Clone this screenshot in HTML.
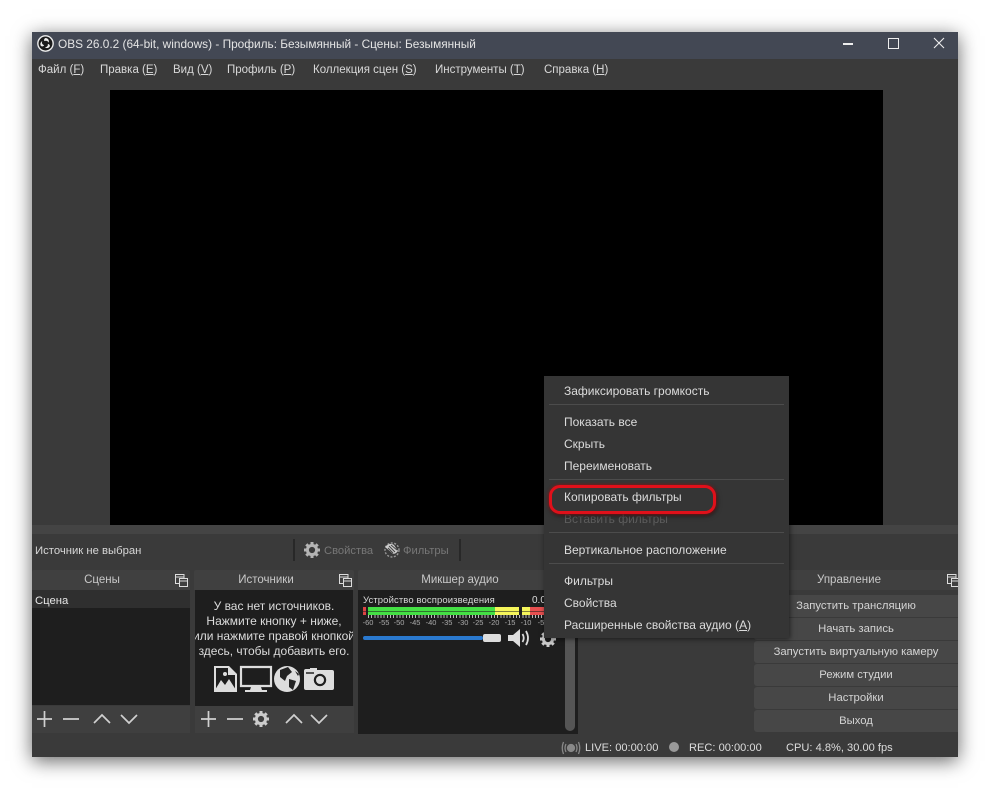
<!DOCTYPE html>
<html><head><meta charset="utf-8"><style>
html,body{margin:0;padding:0;background:#fff;width:990px;height:789px;overflow:hidden}
body{font-family:"Liberation Sans","DejaVu Sans",sans-serif;font-size:11.5px;color:#d8d8d8}
#root{position:absolute;left:0;top:0;width:990px;height:789px;filter:blur(.35px)}
#root div,#root span,#root svg{position:absolute}
.t{white-space:nowrap;line-height:14px}
u{text-decoration:underline}
.hd{background:#404040;height:20px;top:570px;line-height:21px;color:#c8c8c8;border-radius:2px 2px 0 0}
.hd b{font-weight:normal;position:absolute;top:0;transform:translateX(-50%);white-space:nowrap}
.bt{background:#474747;left:754px;width:204px;height:22px;line-height:22px;text-align:center;color:#d4d4d4;border-radius:3px 0 0 3px;font-size:11.3px}
.m{left:564px;color:#dcdcdc;font-size:12px;white-space:nowrap;line-height:14px}
.sep{left:549px;width:235px;height:1px;background:#4c4c4c}
.st{top:741px;color:#ddd;font-size:11.100px}
.lb{top:618px;font-size:7.500px;line-height:9px;color:#aaa;transform:translateX(-50%)}
</style></head><body><div id="root">
<div style="left:32px;top:32px;width:926px;height:725px;background:#3a3a3a;box-shadow:0 4px 18px rgba(0,0,0,.6)"></div>
<div style="left:32px;top:32px;width:926px;height:27px;background:#434854"></div>

<svg style="left:37px;top:35px" width="17" height="17" viewBox="0 0 16 16"><circle cx="8" cy="8" r="7.200" fill="#1b1b1b" stroke="#eee" stroke-width="1.300"/><path d="M8 2.800A3 3 0 0 1 10.800 7.200A2.500 2.500 0 0 0 7 5.800A2 2 0 0 1 8 2.800ZM3.600 10.200A3 3 0 0 1 5 5.800A2.500 2.500 0 0 0 6.700 9.600A2 2 0 0 1 3.600 10.200ZM12.200 10.500A3 3 0 0 1 7.400 11.500A2.500 2.500 0 0 0 10.200 8.500A2 2 0 0 1 12.200 10.500Z" fill="#eee"/></svg>
<div class="t" style="left:58px;top:37px;color:#e4e4e4;font-size:11.850px">OBS 26.0.2 (64-bit, windows) - Профиль: Безымянный - Сцены: Безымянный</div>
<div style="left:843px;top:43px;width:10px;height:1.500px;background:#eee"></div>
<div style="left:888px;top:38px;width:9px;height:9px;border:1px solid #eee"></div>
<svg style="left:933px;top:37px" width="12" height="12" viewBox="0 0 12 12"><path d="M1 1L11 11M11 1L1 11" stroke="#eee" stroke-width="1.100"/></svg>

<div class="t" style="left:38px;top:63px">Файл (<u>F</u>)</div>
<div class="t" style="left:100px;top:63px">Правка (<u>E</u>)</div>
<div class="t" style="left:173px;top:63px">Вид (<u>V</u>)</div>
<div class="t" style="left:227px;top:63px">Профиль (<u>P</u>)</div>
<div class="t" style="left:313px;top:63px">Коллекция сцен (<u>S</u>)</div>
<div class="t" style="left:435px;top:63px">Инструменты (<u>T</u>)</div>
<div class="t" style="left:544px;top:63px">Справка (<u>H</u>)</div>

<div style="left:110px;top:90px;width:773px;height:435px;background:#000"></div>
<div style="left:32px;top:525px;width:926px;height:9px;background:#444"></div>
<div class="t" style="left:35px;top:544px;color:#d6d6d6;font-size:11.300px">Источник не выбран</div>
<div style="left:293px;top:539px;width:2px;height:22px;background:#282828"></div>
<div style="left:459px;top:539px;width:2px;height:22px;background:#282828"></div>
<svg style="left:304px;top:542px" width="16" height="16" viewBox="0 0 16 16"><circle cx="8" cy="8" r="4.600" fill="none" stroke="#b4b4b4" stroke-width="3"/><path d="M8 0V3M8 13V16M0 8H3M13 8H16M2.300 2.300L4.500 4.500M11.500 11.500L13.700 13.700M13.700 2.300L11.500 4.500M4.500 11.500L2.300 13.700" stroke="#b4b4b4" stroke-width="3"/></svg>
<div class="t" style="left:324px;top:544px;color:#777;font-size:11.200px">Свойства</div>
<svg style="left:384px;top:542px" width="16" height="16" viewBox="0 0 16 16"><circle cx="8" cy="8" r="7" fill="none" stroke="#999" stroke-width="1.400" stroke-dasharray="2 1.500"/><path d="M1 5Q6 0 10 3L14 9Q10 14 7 10Z" fill="#ccc"/><path d="M5 4L11 10M7 3L13 8M4 6L9 11" stroke="#444"/></svg>
<div class="t" style="left:403px;top:544px;color:#777;font-size:11.200px">Фильтры</div>

<div class="hd" style="left:32px;width:158px"><b style="left:70px">Сцены</b></div>
<div class="hd" style="left:194px;width:160px"><b style="left:72px">Источники</b></div>
<div class="hd" style="left:358px;width:220px"><b style="left:102px">Микшер аудио</b></div>
<div class="hd" style="left:754px;width:204px"><b style="left:95px">Управление</b></div>

<svg style="left:175px;top:574px" width="13" height="13" viewBox="0 0 13 13" fill="none" stroke="#ddd"><path d="M4.500 9.500H.5V.5H9V4.500"/><path d="M.5 3H9"/><rect x="4.500" y="4.500" width="8" height="8"/><path d="M4.500 7H12.500"/></svg>
<svg style="left:339px;top:574px" width="13" height="13" viewBox="0 0 13 13" fill="none" stroke="#ddd"><path d="M4.500 9.500H.5V.5H9V4.500"/><path d="M.5 3H9"/><rect x="4.500" y="4.500" width="8" height="8"/><path d="M4.500 7H12.500"/></svg>
<svg style="left:947px;top:574px" width="11" height="13" viewBox="0 0 11 13" fill="none" stroke="#ddd"><path d="M4.500 9.500H.5V.5H9V4.500"/><path d="M.5 3H9"/><rect x="4.500" y="4.500" width="8" height="8"/><path d="M4.500 7H12.500"/></svg>

<div style="left:32px;top:590px;width:158px;height:115px;background:#1e1e1e"></div>
<div style="left:32px;top:590px;width:158px;height:18px;background:#2f2f2f"></div>
<div class="t" style="left:35px;top:594px;color:#e6e6e6;font-size:11.300px">Сцена</div>
<div style="left:32px;top:706px;width:158px;height:27px;background:#3f3f3f"></div>

<div style="left:195px;top:590px;width:158px;height:116px;background:#1e1e1e;overflow:hidden;color:#dcdcdc;font-size:12px;line-height:15px;text-align:center">
<div style="left:-11px;width:180px;top:9px;white-space:nowrap">У вас нет источников.</div>
<div style="left:-11px;width:180px;top:24px;white-space:nowrap">Нажмите кнопку + ниже,</div>
<div style="left:-11px;width:180px;top:39px;white-space:nowrap">или нажмите правой кнопкой</div>
<div style="left:-11px;width:180px;top:54px;white-space:nowrap">здесь, чтобы добавить его.</div>
</div>
<div style="left:195px;top:706px;width:159px;height:27px;background:#3f3f3f"></div>

<svg style="left:214px;top:665px" width="124" height="29" viewBox="0 0 124 29">
<path d="M0 1H15L23 9V27H0ZM2 3V25H21V10H14V3Z" fill="#ddd" fill-rule="evenodd"/><path d="M1 25L7 15L11 20L15 14L22 25Z" fill="#ddd"/><circle cx="11" cy="9" r="2" fill="#ddd"/>
<path d="M27 2H57V21H27Z" fill="none" stroke="#ddd" stroke-width="2.200"/><path d="M37 22H47L48 25H53V27H31V25H36Z" fill="#ddd"/>
<circle cx="73" cy="14" r="13" fill="#ddd"/><path d="M66 5L74 2L78 7L73 11L71 16L66 12ZM75 14L82 16L79 25L75 22ZM81 6L85 9L84 11Z" fill="#222"/>
<path d="M90 6Q90 4 92 4H96V3H103V5H118Q120 5 120 7V23Q120 25 118 25H92Q90 25 90 23Z" fill="#ddd"/><circle cx="106" cy="15" r="6" fill="#1e1e1e" stroke="#222" stroke-width=".5"/><circle cx="106" cy="15" r="4" fill="#ddd"/><path d="M92 8H100" stroke="#222" stroke-width="1.500"/>
</svg>

<svg style="left:36px;top:711px" width="110" height="16" viewBox="0 0 110 16" fill="none" stroke="#d0d0d0" stroke-width="1.700"><path d="M1 8H16M8.500 0V16M27 8H43M58 12L66 4L74 12M85 4L93 12L101 4"/></svg>
<svg style="left:200px;top:711px" width="130" height="16" viewBox="0 0 130 16" fill="none" stroke="#d0d0d0" stroke-width="1.700"><path d="M1 8H16M8.500 0V16M27 8H43M86 12L94 4L102 12M111 4L119 12L127 4"/></svg>
<svg style="left:253px;top:711px" width="16" height="16" viewBox="0 0 16 16"><circle cx="8" cy="8" r="4.600" fill="none" stroke="#ccc" stroke-width="3"/><path d="M8 0V3M8 13V16M0 8H3M13 8H16M2.300 2.300L4.500 4.500M11.500 11.500L13.700 13.700M13.700 2.300L11.500 4.500M4.500 11.500L2.300 13.700" stroke="#ccc" stroke-width="3"/></svg>

<div style="left:358px;top:590px;width:220px;height:144px;background:#1e1e1e"></div>
<div style="left:565px;top:600px;width:10px;height:131px;background:#555;border-radius:5px"></div>
<div class="t" style="left:363px;top:594px;font-size:9.500px;line-height:13px;color:#d8d8d8;letter-spacing:.1px">Устройство воспроизведения</div>
<div class="t" style="left:532px;top:594px;font-size:10px;line-height:13px;color:#ddd">0.0</div>
<div style="left:363px;top:607px;width:3px;height:8px;background:#d44"></div>
<div style="left:368px;top:607px;width:127px;height:8px;background:#44e044"></div>
<div style="left:495px;top:607px;width:24px;height:8px;background:#f5f55a"></div>
<div style="left:522px;top:607px;width:8px;height:8px;background:#f5f55a"></div>
<div style="left:530px;top:607px;width:14px;height:8px;background:#e85050"></div>
<div style="left:363px;top:611px;width:181px;height:1px;background:rgba(30,30,30,.55)"></div>
<div style="left:368px;top:615px;width:176px;height:3px;background:repeating-linear-gradient(90deg,#bbb 0,#bbb 1px,transparent 1px,transparent 3.150px)"></div>
<div class="lb" style="left:368px">-60</div><div class="lb" style="left:384px">-55</div><div class="lb" style="left:399px">-50</div><div class="lb" style="left:415px">-45</div><div class="lb" style="left:431px">-40</div><div class="lb" style="left:447px">-35</div><div class="lb" style="left:463px">-30</div><div class="lb" style="left:478px">-25</div><div class="lb" style="left:494px">-20</div><div class="lb" style="left:510px">-15</div><div class="lb" style="left:526px">-10</div><div class="lb" style="left:541px">-5</div>

<div style="left:363px;top:636px;width:120px;height:4px;background:#2a79cf;border-radius:2px"></div>
<div style="left:483px;top:634px;width:18px;height:8px;background:#ddd;border-radius:2px"></div>
<svg style="left:507px;top:628px" width="24" height="20" viewBox="0 0 24 20"><path d="M1 7H6L13 1V19L6 13H1Z" fill="#ddd"/><path d="M15.500 6Q18 10 15.500 14M19 3Q23 10 19 17" fill="none" stroke="#ddd" stroke-width="1.800"/></svg>
<svg style="left:540px;top:631px" width="16" height="16" viewBox="0 0 16 16"><circle cx="8" cy="8" r="4.600" fill="none" stroke="#ccc" stroke-width="3"/><path d="M8 0V3M8 13V16M0 8H3M13 8H16M2.300 2.300L4.500 4.500M11.500 11.500L13.700 13.700M13.700 2.300L11.500 4.500M4.500 11.500L2.300 13.700" stroke="#ccc" stroke-width="3"/></svg>

<div class="bt" style="top:595px">Запустить трансляцию</div>
<div class="bt" style="top:618px">Начать запись</div>
<div class="bt" style="top:641px">Запустить виртуальную камеру</div>
<div class="bt" style="top:664px">Режим студии</div>
<div class="bt" style="top:687px">Настройки</div>
<div class="bt" style="top:710px">Выход</div>

<svg style="left:561px;top:741px" width="20" height="14" viewBox="0 0 20 14" fill="none" stroke="#888" stroke-width="1.300"><circle cx="10" cy="7" r="3.500" fill="#888"/><path d="M5 3Q3 7 5 11M15 3Q17 7 15 11M2.500 1Q0 7 2.500 13M17.500 1Q20 7 17.500 13"/></svg>
<div class="t st" style="left:585px">LIVE: 00:00:00</div>
<div style="left:669px;top:742px;width:10px;height:10px;border-radius:50%;background:#999"></div>
<div class="t st" style="left:689px">REC: 00:00:00</div>
<div class="t st" style="left:786px">CPU: 4.8%, 30.00 fps</div>

<div style="left:544px;top:376px;width:245px;height:262px;background:#353535;box-shadow:1px 1px 5px rgba(0,0,0,.55)"></div>
<div class="m" style="top:384px">Зафиксировать громкость</div>
<div class="sep" style="top:404px"></div>
<div class="m" style="top:415px">Показать все</div>
<div class="m" style="top:437px">Скрыть</div>
<div class="m" style="top:459px">Переименовать</div>
<div class="sep" style="top:479px"></div>
<div class="m" style="top:490px">Копировать фильтры</div>
<div class="m" style="top:512px;color:#5d5d5d">Вставить фильтры</div>
<div class="sep" style="top:532px"></div>
<div class="m" style="top:543px">Вертикальное расположение</div>
<div class="sep" style="top:563px"></div>
<div class="m" style="top:574px">Фильтры</div>
<div class="m" style="top:596px">Свойства</div>
<div class="m" style="top:618px">Расширенные свойства аудио (<u>A</u>)</div>
<div style="left:549px;top:485px;width:161px;height:23px;border:3px solid #e0101a;border-radius:11px;box-shadow:0 0 3px rgba(220,0,0,.7),1px 2px 5px rgba(0,0,0,.5)"></div>
</div></body></html>
